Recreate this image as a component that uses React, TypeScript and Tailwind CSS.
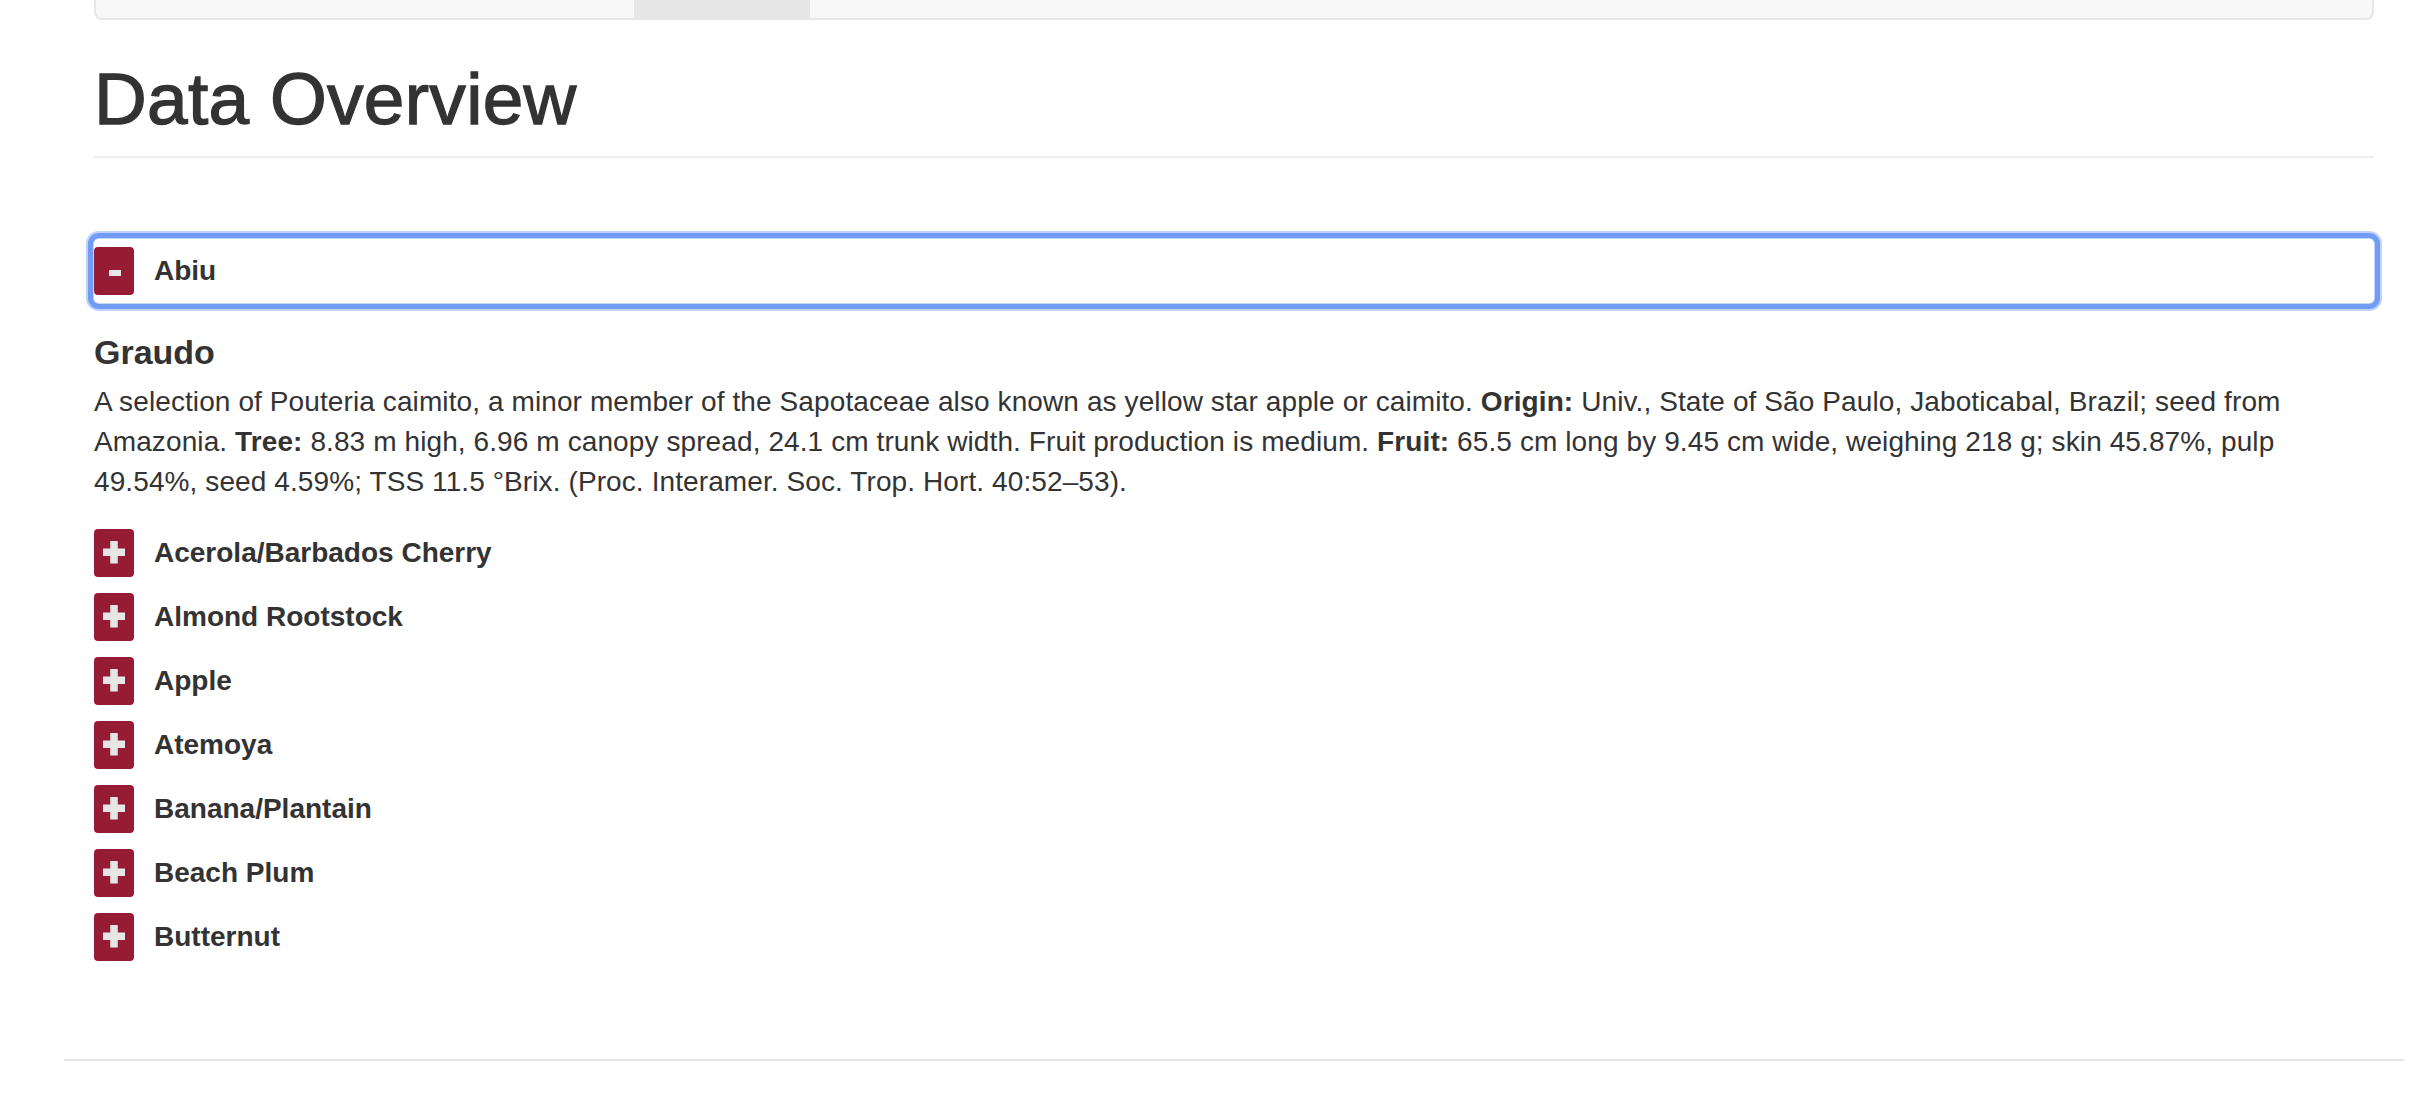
import React from "react";

const items = [
  "Acerola/Barbados Cherry",
  "Almond Rootstock",
  "Apple",
  "Atemoya",
  "Banana/Plantain",
  "Beach Plum",
  "Butternut",
];

function PlusBox() {
  return (
    <div className="w-[40px] h-[48px] rounded-[4px] bg-[#951c34] shrink-0">
      <svg width="40" height="48" viewBox="0 0 40 48">
        <rect x="9" y="19.5" width="22" height="7.5" fill="#e6e6e6" />
        <rect x="16.25" y="12" width="7.5" height="22.5" fill="#e6e6e6" />
      </svg>
    </div>
  );
}

function MinusBox() {
  return (
    <div className="w-[40px] h-[48px] rounded-[4px] bg-[#951c34] shrink-0 flex items-center justify-center">
      <div className="w-[12px] h-[6px] bg-[#e6e6e6] mt-[4px] ml-[2px]" />
    </div>
  );
}

export default function App() {
  return (
    <div className="min-h-[1094px] bg-white text-[#333] overflow-hidden font-['Liberation_Sans',Arial,sans-serif]">
      <div className="ml-[94px] w-[2280px]">
        <div className="h-[20px] flex rounded-b-[8px] border-2 border-t-0 border-[#e7e7e7] bg-[#f8f8f8]">
          <div className="w-[538px]" />
          <div className="w-[176px] bg-[#e7e7e7]" />
        </div>
        <h1 className="mt-[39px] text-[73px] leading-[80px] font-normal tracking-[0.3px] [-webkit-text-stroke:1.3px_#333]">
          Data Overview
        </h1>
        <div className="mt-[17px] h-[2px] bg-[#eeeeee]" />
        <div className="mt-[81px] h-[64px] flex items-center gap-[20px] rounded-[5px] bg-white shadow-[0_0_0_1px_#c6d7fb,0_0_0_6px_#719cf6,0_0_0_8px_#c0d2fa]">
          <MinusBox />
          <span className="text-[28px] font-bold leading-[40px]">Abiu</span>
        </div>
        <h4 className="mt-[29px] text-[34px] font-bold leading-[40px]">Graudo</h4>
        <p className="mt-[10px] text-[28px] leading-[40px] tracking-[0.1px]">
          A selection of Pouteria caimito, a minor member of the Sapotaceae also known as yellow star apple or caimito.{" "}
          <b>Origin:</b> Univ., State of São Paulo, Jaboticabal, Brazil; seed from Amazonia. <b>Tree:</b> 8.83 m high, 6.96 m
          canopy spread, 24.1 cm trunk width. Fruit production is medium. <b>Fruit:</b> 65.5 cm long by 9.45 cm wide, weighing
          218 g; skin 45.87%, pulp 49.54%, seed 4.59%; TSS 11.5 °Brix. (Proc. Interamer. Soc. Trop. Hort. 40:52–53).
        </p>
        <div className="mt-[19px] flex flex-col">
          {items.map((it) => (
            <div key={it} className="h-[64px] flex items-center gap-[20px]">
              <PlusBox />
              <span className="text-[28px] font-bold leading-[40px]">{it}</span>
            </div>
          ))}
        </div>
      </div>
      <div className="ml-[64px] w-[2340px] mt-[90px] h-[2px] bg-[#e5e5e5]" />
    </div>
  );
}
